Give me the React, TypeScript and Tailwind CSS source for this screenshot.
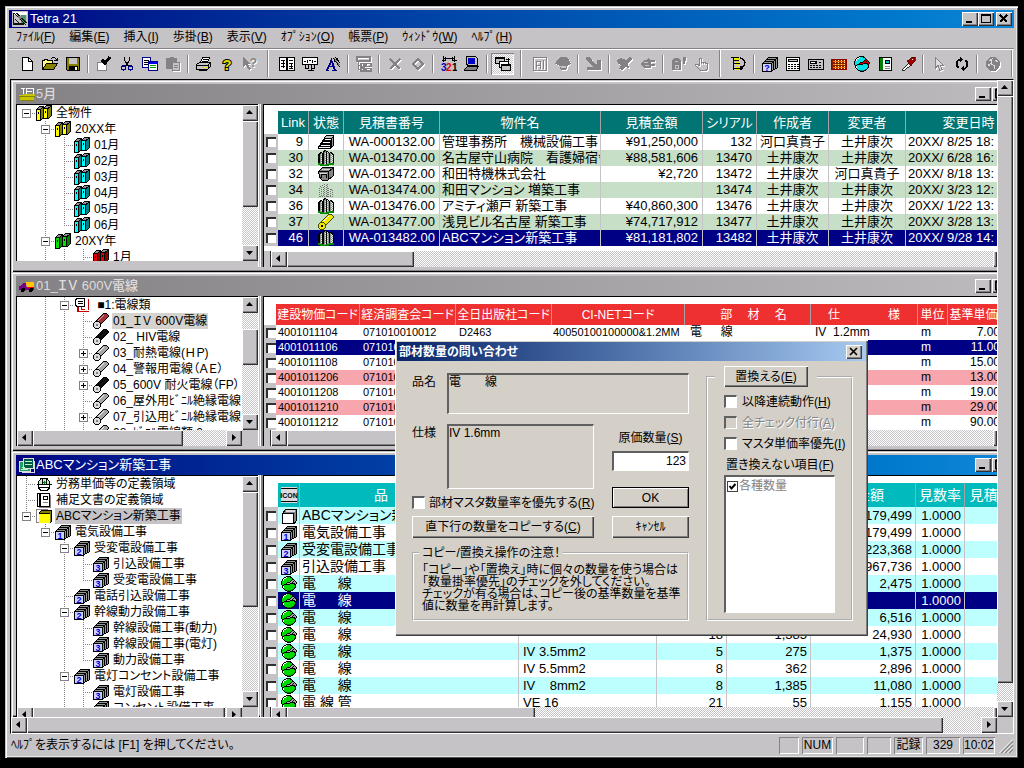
import type { ReactNode } from 'react';

const RAISED = 'bg-[#c6c3c6] shadow-[inset_1px_1px_0_#fff,inset_-1px_-1px_0_#313031,inset_-2px_-2px_0_#848284]';
const DITHER = 'bg-[repeating-conic-gradient(#fff_0_25%,#c6c3c6_0_50%)] bg-[length:2px_2px]';

/* ---------- icons ---------- */

function Svg({ children, size = 16 }: { children: ReactNode; size?: number }) {
  return (
    <svg width={size} height={size} viewBox="0 0 16 16" shapeRendering="crispEdges" fill="none" className="shrink-0" aria-hidden="true">
      {children}
    </svg>
  );
}

function Off({ children }: { children: ReactNode }) {
  return (
    <Svg>
      <g color="#ffffff" transform="translate(1 1)">{children}</g>
      <g color="#848284">{children}</g>
    </Svg>
  );
}

/* Draws a 16x16 sprite: one character per pixel, equal neighbours merged into one rect. */
function Sprite({ rows, colors, children }: { rows: string[]; colors: Record<string, string>; children?: ReactNode }) {
  const rects: ReactNode[] = [];
  rows.forEach((row, y) => {
    let x = 0;
    while (x < row.length) {
      const ch = row[x];
      let end = x + 1;
      while (end < row.length && row[end] === ch) end += 1;
      if (ch !== '.') rects.push(<rect key={`${x}-${y}`} x={x} y={y} width={end - x} height={1} fill={colors[ch]} />);
      x = end;
    }
  });
  return <Svg>{rects}{children}</Svg>;
}

const BOOKS = [
  '..........kkkkkk',
  '...kkkkk.kggggkk',
  '..kgggkkkgggkksk',
  '.kgggkskkkkkkssk',
  'kkkkksskfffksssk',
  'kfffksskfffksssk',
  'kfffksskfkfksssk',
  'kfkfksskfkfksssk',
  'kfkfksskfffksssk',
  'kfffksskfffksssk',
  'kfffksskfffksssk',
  'kfffksskfffkssk.',
  'kfffksskfffksk..',
  'kfffkskkkkkkk...',
  'kfffkk..........',
  'kkkkk...........',
];
const BOX = [
  '................',
  '......kkkkkkkkkk',
  '.....kggggggggkk',
  '....kkkkkkkkkkgk',
  '...kggggggggkkgk',
  '..kkkkkkkkkkgkgk',
  '.kggggggggkkgkgk',
  'kkkkkkkkkkgkgkgk',
  'kbbbbbbbbkgkgkgk',
  'kbbbbbbbbkgkgkgk',
  'kbbbbbbbbkgkgkgk',
  'kbbbbbbbbkgkgkgk',
  'kbbbbbbbbkgkgkk.',
  'kbbbbbbbbkgkk...',
  'kbbbbbbbbkk.....',
  'kkkkkkkkkk......',
];
const HELMET = [
  '.....kkkkk......',
  '...kkwfffkk.....',
  '..kwwffffffk....',
  '.kwffffffffkk...',
  '.kwfffffffkaak..',
  'kffffffffkaakak.',
  'kfffffkkkaakaaak',
  'kffffkaaakkkkkak',
  'kffkkkkkkffffkk.',
  '.kkfffffffffffk.',
  '.kwfffffffffffk.',
  '.kwffffffffffdk.',
  '..kffffffffffk..',
  '...kfffffffdk...',
  '....kkddddkk....',
  '......kkkk......',
];
const TOWERS = [
  '......kk........',
  '.....kkgkk......',
  '..kk.kggkwk.kk..',
  '.kkgkkgwkggkgkk.',
  'kkgwkkggkwgkgwkk',
  'kkggkkgwkggkggwk',
  'kkgwkkggkwgkgwgk',
  'kkggkkgwkggkggwk',
  'kkgwkkggkwgkgwgk',
  'kkggkkgwkggkggwk',
  'kkgwkkggkwgkgwgk',
  'kkggkkgwkggkggwk',
  'kkgwkkggkwgkgwgk',
  'eeggkkgwkggeeeee',
  'eeeeeeggeeeeeeee',
  '..eeeeeeeee.....',
];
const CABLE = [
  '..........kkkk..',
  '.........kbbbbk.',
  '........kblbbbbk',
  '.......kblbbbbbk',
  '......kblbbbbbk.',
  '.....kblbbbbbk..',
  '....kblbbbbbk...',
  '...kblbbbbbk....',
  '..kkkkbbbbk.....',
  '.kwwwwkbbk......',
  'kwwwwwwkk.......',
  'kwwggwwk........',
  'kwwggwwk........',
  'kwwwwwwk........',
  '.kwwwwk.........',
  '..kkkk..........',
];

const C = 'currentColor';

const IconNew = <Svg><path d="M3.5 1.5H9.5L13.5 5.5V14.5H3.5z" fill="#fff" stroke="#000" /><path d="M9.5 1.5V5.5H13.5" stroke="#000" /></Svg>;
const IconOpen = (
  <Svg>
    <path d="M0.5 13.5V4.5H2.5V3.5H5.5V4.5H10.5V7.5" fill="#ffff7b" stroke="#000" />
    <path d="M0.5 13.5L4.5 7.5H15.5L11.5 13.5z" fill="#848200" stroke="#000" />
    <path d="M9 2.5H10M10 1.5H13M13 2.5H14M14 3.5H15M12 4.5H15M15 1.5V5" stroke="#000" />
  </Svg>
);
const IconSave = (
  <Svg>
    <path d="M1.5 1.5H14.5V14.5H2.5L1.5 13.5z" fill="#848200" stroke="#000" />
    <rect x="4" y="2" width="8" height="6" fill="#c6c3c6" stroke="none" />
    <rect x="4" y="10" width="9" height="4" fill="#000" />
    <rect x="10" y="11" width="2" height="3" fill="#fff" />
  </Svg>
);
const IconCheckBox = (
  <Svg>
    <rect x="1.5" y="6.5" width="9" height="8" fill="#fff" stroke="#848284" />
    <path d="M6 4L9 7L14 1" stroke="#000" strokeWidth="3" />
  </Svg>
);
const IconCut = (
  <Svg>
    <path d="M5.5 1V4L8.5 9L10 11M10.5 1V4L7.5 9L6 11" stroke="#000" />
    <circle cx="4.5" cy="12" r="2" stroke="#000084" strokeWidth="1.3" />
    <circle cx="11.5" cy="12" r="2" stroke="#000084" strokeWidth="1.3" />
  </Svg>
);
const IconCopy = (
  <Svg>
    <rect x="0.5" y="1.5" width="8" height="10" fill="#fff" stroke="#000084" />
    <path d="M2 4.5H7M2 6.5H7M2 8.5H7" stroke="#000" />
    <rect x="6.5" y="5.5" width="9" height="9" fill="#fff" stroke="#000084" />
    <path d="M7 7H15" stroke="#0000ff" strokeWidth="2" />
    <path d="M8 9.5H14M8 11.5H14" stroke="#00a200" />
  </Svg>
);
const IconPaste = (
  <Svg>
    <path d="M1 2H5V1H9V2H12V6H7V13H1z" fill="#848284" />
    <rect x="7.5" y="6.5" width="7" height="8" fill="#c6c3c6" stroke="#848284" />
    <path d="M9 9.5H13M9 11.5H13" stroke="#848284" />
    <path d="M15.5 7V15.5H8" stroke="#fff" />
  </Svg>
);
const IconPrint = (
  <Svg>
    <path d="M4.5 6.5L6.5 1.5H13.5L11.5 6.5z" fill="#fff" stroke="#000" />
    <path d="M7 3.5H12M6 5.5H11" stroke="#000" />
    <path d="M0.5 8.5L3.5 6.5H14.5V10.5L11.5 13.5H0.5z" fill="#c6c3c6" stroke="#000" />
    <path d="M1 9.5H12L14 7M12 9V13" stroke="#000" />
    <rect x="8" y="11" width="3" height="1" fill="#efe700" />
    <path d="M3 14.5H11" stroke="#000" />
  </Svg>
);
const IconHelp = (
  <Svg>
    <text x="8" y="13.5" textAnchor="middle" fontSize="15" fontWeight="bold" fontFamily="Liberation Sans, sans-serif" fill="#e7df00" stroke="#000" strokeWidth="2" paintOrder="stroke">?</text>
  </Svg>
);
const IconCtxHelp = (
  <Off>
    <path d="M1 1L1 11L4 9L7 14L9 13L6 8H9z" fill={C} />
    <text x="11.5" y="11" textAnchor="middle" fontSize="12" fontWeight="bold" fontFamily="Liberation Sans, sans-serif" fill={C}>?</text>
  </Off>
);
const IconBookOpen = (
  <Svg>
    <rect x="0.5" y="1.5" width="15" height="13" fill="#fff" stroke="#000" />
    <path d="M8 1V15" stroke="#000" strokeWidth="2" />
    <path d="M2 4.5H6M10 4.5H14M2 7.5H6M10 7.5H14M2 10.5H6M10 10.5H14M10 12.5H14M4.5 4V12M12.5 7V12" stroke="#000" />
  </Svg>
);
const IconLabel = (
  <Svg>
    <rect x="0.5" y="1.5" width="15" height="7" fill="#fff" stroke="#000" />
    <path d="M2 5.5H4M5 3.5V7M7 4.5H9M10.5 3.5V7M12 5.5H14M3.5 9V12.5H6.5V9M9.5 9V14.5M12.5 9V12.5H9M6 14.5H12" stroke="#000" />
  </Svg>
);
const IconWrite = (
  <Svg>
    <path d="M0.5 14.5H4M7 14.5H12M2 14L6.5 4.5L10 14M3.5 10.5H8" stroke="#000084" strokeWidth="1.8" />
    <path d="M8 2L15 11M10 1L15 7M9 6L13 2" stroke="#000" />
    <path d="M9.5 2.5L14.5 9" stroke="#848284" />
  </Svg>
);
const IconTreeOff = <Off><path d="M1 1H14V5H1zM2.5 5V14M2 9.5H5M2 13.5H5M5 7.5H8V11H5zM10 7.5H15V10.5H10zM5 12.5H8V15H5zM10 12.5H15V15H10zM8 9.5H10" stroke={C} strokeWidth="1.4" /></Off>;
const IconDelete = <Off><path d="M3 3L13 13M13 3L3 13" stroke={C} strokeWidth="2.4" /></Off>;
const IconDiamond = <Off><path d="M3 8L8 3L13 8L8 13z" stroke={C} strokeWidth="2.2" /></Off>;
const Icon321 = (
  <Svg>
    <path d="M2 2.5H14M2.5 0V6M13.5 0V6M0.5 4.5H5M11 4.5H16M4.5 1V4M11.5 1V4" stroke="#000" />
    <g fontSize="10" fontWeight="bold" fontFamily="Liberation Sans, sans-serif">
      <text x="0" y="15" fill="#0000c6">3</text>
      <text x="5" y="15" fill="#e70000">2</text>
      <text x="11" y="15" fill="#000">1</text>
    </g>
  </Svg>
);
const IconPC = (
  <Svg>
    <path d="M2.5 0.5H11.5L13.5 2.5V9.5H4.5L2.5 8.5z" fill="#c6c3c6" stroke="#000" />
    <rect x="4" y="2" width="7" height="6" fill="#0000c6" />
    <path d="M0.5 13.5L3.5 10.5H14.5L12.5 13.5V14.5H0.5z" fill="#848284" stroke="#000" />
  </Svg>
);
const IconCascade = (
  <Svg>
    <rect x="0.5" y="1.5" width="9" height="6" fill="#c6c3c6" stroke="#000" />
    <path d="M1 2.5H9M11 3.5H15M13.5 2V5" stroke="#000" />
    <rect x="4.5" y="5.5" width="9" height="6" fill="#fff" stroke="#000" />
    <rect x="6.5" y="8.5" width="9" height="6" fill="#c6c3c6" stroke="#000" />
    <path d="M7 9.5H15" stroke="#000" />
  </Svg>
);
const IconFrameOff = <Off><path d="M1.5 1.5H14.5V14.5H1.5zM4 5.5H8V13M4 9.5H8M11.5 4V13M4.5 5V13" stroke={C} /></Off>;
const IconHeadOff = <Off><path d="M0 8L2 4L5 1H11L14 4L16 8L13 9L11 14H6L4 9z" fill={C} /><path d="M5 9.5H11V12H6z" fill="#c6c3c6" /></Off>;
const IconChartOff = <Off><path d="M0 1H4L9 8H11V4H15V14H1V11H7L0 4z" fill={C} /></Off>;
const IconHandOff = <Off><path d="M0 4L4 2L9 4L13 1L15 3L11 8L12 12L8 11L6 14L2 13L4 9L1 8z" fill={C} /></Off>;
const IconFishOff = <Off><path d="M0 8L4 4H7L8 2L10 4H15V6H11V8H15V10H11V12H4z" fill={C} /><path d="M4 6.5H8M5 9.5H9" stroke="#c6c3c6" /></Off>;
const IconLockOff = <Off><path d="M1 14V5L3 2H7L10 5V14zM12 1H15V5H14V8H12z" fill={C} /><path d="M4 5.5H7M4 9H7V12H4z" stroke="#c6c3c6" /></Off>;
const IconPalmOff = <Off><path d="M5.5 9V2.5H7.5V7.5M7.5 6.5H9.5V8M9.5 6.5H11.5V8M11.5 7.5H13.5V12L12.5 14.5H6.5L1.5 9.5V8.5H3.5L5.5 10" stroke={C} strokeWidth="1.2" /></Off>;
const IconTreeSync = (
  <Svg>
    <path d="M2 1H8V4H2zM4 6H9V9H4zM4 11H9V14H4z" fill="#efe700" />
    <path d="M2.5 1V13.5M2 7.5H9M2 12.5H9M0 1.5H8M3 4.5H8" stroke="#000" />
    <path d="M9 2L12 3L14 6L13 10L10 12M10 9.5V14M8 12.5H12" stroke="#000" strokeWidth="1.3" />
  </Svg>
);
const IconCalc = (
  <Svg>
    <rect x="1.5" y="1.5" width="13" height="13" fill="#fff" stroke="#000" />
    <rect x="3.5" y="3.5" width="9" height="2" fill="#c6c3c6" stroke="#000" />
    <path d="M3 8.5H14M3 10.5H14M3 12.5H14" stroke="#000" strokeDasharray="2 1" />
  </Svg>
);
const IconCard = (
  <Svg>
    <rect x="0.5" y="3.5" width="15" height="10" fill="#c6c3c6" stroke="#000" />
    <rect x="2" y="5" width="7" height="3" fill="#000" /><rect x="3" y="6" width="4" height="1" fill="#fff" />
    <path d="M11 6.5H14M2 9.5H14M2 11.5H14" stroke="#000" strokeDasharray="2 1" />
  </Svg>
);
const IconAbacus = (
  <Svg>
    <rect x="0.5" y="3.5" width="15" height="10" fill="#842000" stroke="#8c0000" />
    <path d="M2 5.5H14M2 8.5H14M2 11.5H14" stroke="#ff6500" strokeWidth="1.2" />
    <path d="M4.5 4V13M7.5 4V13M10.5 4V13M13.5 4V13" stroke="#fff37b" strokeDasharray="1 1" />
  </Svg>
);

function HelmetIcon({ main, dark, accent }: { main: string; dark: string; accent: string }) {
  return <Sprite rows={HELMET} colors={{ k: '#000', w: '#ffffff', f: main, d: dark, a: accent }} />;
}
const IconNotebook = (
  <Svg>
    <rect x="2.5" y="1.5" width="12" height="13" fill="#fff" stroke="#000" />
    <rect x="3" y="2" width="3" height="12" fill="#008200" />
    <rect x="8.5" y="4.5" width="4" height="3" fill="#00c3c6" stroke="#000" />
    <path d="M8 10.5H13M8 12.5H13" stroke="#848284" />
  </Svg>
);
const IconDropper = (
  <Svg>
    <path d="M2 14L9 7L11 9L5 14z" fill="#fff" stroke="#000" strokeWidth="0.8" />
    <path d="M7 5L9 4L12 1H15V5L12 8L11 10z" fill="#a50000" stroke="#420000" strokeWidth="0.8" />
    <path d="M12 3.5H13" stroke="#fff" />
  </Svg>
);
const IconPointerOff = <Off><path d="M4.5 1.5V12L7 9.5L9 14.5L11 13.5L9 9H12z" stroke={C} fill="#dedbde" /></Off>;
const IconRefresh = (
  <Svg>
    <path d="M7 3.5H5L3 5.5V10L4.5 12M9 12.5H11L13 10.5V6L11.5 4" stroke="#000" strokeWidth="2" />
    <path d="M6 1V6L9 3.5zM10 10V15L7 12.5z" fill="#000" />
  </Svg>
);
const IconGlobeOff = <Off><circle cx="8" cy="8" r="7" fill={C} /><path d="M4 5L7 3L6 8L10 10L9 13M10 4L13 6M3 9H5" stroke="#dedbde" strokeWidth="1.2" /></Off>;

function BoxIcon({ n }: { n: string }) {
  return (
    <Sprite rows={BOX} colors={{ k: '#000', g: '#949694', b: '#ced3ff' }}>
      <text x="5" y="15" textAnchor="middle" fontSize="9" fontWeight="bold" fontFamily="Liberation Sans, sans-serif" fill="#0000d6">{n}</text>
    </Sprite>
  );
}
function BooksIcon({ face, side }: { face: string; side: string }) {
  return <Sprite rows={BOOKS} colors={{ k: '#000', g: '#949294', f: face, s: side }} />;
}
function CableIcon({ body, light }: { body: string; light: string }) {
  return <Sprite rows={CABLE} colors={{ k: '#000', b: body, l: light, w: '#dedbde', g: '#848284' }} />;
}
const IconDocStack = (
  <Svg>
    <path d="M4 2V14.5H15M7.5 2V12.5H11M14.5 2V13" stroke="#c60000" strokeWidth="1.4" />
    <path d="M1.5 2.5L3.5 1.5H10.5V9.5H3.5L1.5 8.5z" fill="#fff" stroke="#000" strokeWidth="1.5" />
    <path d="M4 4.5H9M4 6.5H9" stroke="#000" />
  </Svg>
);
const IconHat = (
  <Svg>
    <path d="M2.5 8V5.5L5 2.5H11L13.5 5.5V8" fill="#d6dfd6" stroke="#000" />
    <path d="M2.5 9V12L5 14.5H11L13.5 12V9" fill="#fff" stroke="#000" />
    <path d="M0.5 8.5H15.5M3 11.5H13M6.5 3V8M10.5 3V8" stroke="#000" />
    <path d="M7 6.5H10M8.5 4.5V8" stroke="#008200" />
  </Svg>
);
const IconManual = (
  <Svg>
    <rect x="1.5" y="1.5" width="12" height="13" fill="#fff" stroke="#000" />
    <path d="M4.5 1.5V14.5M3 2V14" stroke="#000" />
    <rect x="7" y="4" width="4" height="3" fill="#fff" stroke="#000" />
    <path d="M7 10.5H12M14.5 3V15.5H3" stroke="#848284" />
  </Svg>
);
const IconYellowCube = (
  <Svg>
    <path d="M0.5 5.5V1.5H11.5L13.5 4.5" fill="#fff" stroke="#848284" />
    <path d="M3 5L5 2H16V13L14 15H3z" fill="#000" />
    <path d="M5 3H15V5H4z" fill="#848200" /><path d="M14 5H15V13L14 14z" fill="#848200" />
    <rect x="3" y="6" width="11" height="9" fill="#ffff00" />
    <path d="M0.5 3V14.5H3" stroke="#848284" />
  </Svg>
);
const IconWhiteCube = (
  <Svg>
    <path d="M1.5 5.5L4.5 1.5H15.5V12.5L13.5 15H1.5z" fill="#848284" stroke="#000" />
    <rect x="1.5" y="5.5" width="11" height="10" fill="#fff" stroke="#000" />
    <path d="M5 3H14" stroke="#dedbde" strokeWidth="2" />
  </Svg>
);
const IconSteps = (
  <Svg>
    <path d="M6 3L8 1H16V11L13 15H0V12L2 11V9L4 8V6L6 5z" fill="#000" />
    <path d="M8 2H15L13 4H7z" fill="#c6c3c6" />
    <path d="M7 5H13V6H7zM5 8H12V9H5zM3 11H12V12H3zM1 13H12V14H1z" fill="#fff" />
    <path d="M14 4H15V11L14 12z" fill="#949694" />
  </Svg>
);
const IconTowers = <Sprite rows={TOWERS} colors={{ k: '#000', g: '#8c968c', w: '#e7efe7', e: '#008a00' }} />;
const IconTowersGhost = (
  <Svg>
    <path d="M1.5 14.5V5.5L4 3.5L5.5 5V14.5M6.5 14.5V1.5L9.5 2.5V14.5M10.5 14.5V5.5L13 6.5L14.5 9.5V14.5H1M3.5 5V14M8.5 3V14M12.5 7V14" stroke="#737573" strokeDasharray="1 1" />
  </Svg>
);
const IconCrate = (
  <Svg>
    <path d="M0.5 5.5L4.5 1.5H15.5V9.5L9.5 14.5H4.5L1.5 11z" fill="#848684" stroke="#000" />
    <path d="M0.5 5.5H10.5L15 2M10.5 5.5V14M3.5 12V8.5H8.5V12" stroke="#000" />
    <path d="M4 3.5H12M2 7.5H9" stroke="#dedbde" />
  </Svg>
);
const IconRoll = <Sprite rows={CABLE} colors={{ k: '#4a4900', b: '#efe700', l: '#ffffff', w: '#efe700', g: '#000' }} />;
const IconApp = (
  <Svg>
    <rect width="16" height="16" fill="#c6c3c6" />
    <path d="M1 1H15V4H1z" fill="#fff" /><path d="M9 4H14V12H9z" fill="#42a263" />
    <path d="M1.5 2V13H12M2 2L14 14M4 2L15 12M3 8L7 12" stroke="#101010" strokeWidth="1.3" />
    <path d="M6 5L11 5L7 9" fill="#848284" />
  </Svg>
);
const IconShip = (
  <Svg>
    <path d="M0 9H4V8H16V10L14 15H2z" fill="#c6c300" />
    <path d="M0 10.5H16M2 14.5H14" stroke="#848200" />
    <path d="M2 2.5H6M4.5 2V8M7 2.5H14V8M8 5.5H13M7.5 2V8" stroke="#fff" />
  </Svg>
);
const IconTruck = (
  <Svg>
    <path d="M0 8H2L4 5H7V9H15V12H0z" fill="#7b0084" />
    <path d="M7 4H15V9H8z" fill="#ffc300" /><path d="M8 9.5H15" stroke="#ff0000" />
    <circle cx="4" cy="12" r="2" fill="#000" /><circle cx="12" cy="12" r="2" fill="#000" />
  </Svg>
);
const IconSheets = (
  <Svg>
    <rect x="0.5" y="4.5" width="11" height="10" fill="#21a263" stroke="#dedbde" />
    <rect x="4.5" y="1.5" width="10" height="10" fill="#005942" stroke="#dedbde" />
    <path d="M6 4.5H13M6 7.5H13M2 12.5H9M3 10.5H6" stroke="#b5ffc6" />
    <path d="M3 15.5H15.5V4" stroke="#dedbde" />
  </Svg>
);

/* ---------- window controls ---------- */

type Dir = 'up' | 'down' | 'left' | 'right';
const ARROWS: Record<Dir, string> = {
  up: 'M4 9H11L7.5 5z',
  down: 'M4 6H11L7.5 10z',
  left: 'M9 4V11L5 7.5z',
  right: 'M6 4V11L10 7.5z',
};

function Arrow({ dir }: { dir: Dir }) {
  return (
    <button type="button" aria-label={`scroll ${dir}`} className={`h-4 w-4 shrink-0 ${RAISED}`}>
      <svg width="16" height="16" viewBox="0 0 16 16" aria-hidden="true"><path d={ARROWS[dir]} fill="#000" /></svg>
    </button>
  );
}

function VScroll({ space, thumb }: { space?: string; thumb: string }) {
  return (
    <div className={`flex w-4 shrink-0 flex-col ${DITHER}`}>
      <Arrow dir="up" />
      <div className="flex min-h-0 flex-1 flex-col">
        {space && <div className={`shrink-0 ${space}`} />}
        <div className={`${thumb} ${RAISED}`} />
      </div>
      <Arrow dir="down" />
    </div>
  );
}

function WinButton({ kind, cut }: { kind: 'min' | 'max' | 'close'; cut?: boolean }) {
  return (
    <button type="button" aria-label={kind} className={`h-[14px] shrink-0 overflow-hidden ${cut ? 'w-[5px]' : 'w-4'} ${RAISED}`}>
      <svg width="16" height="14" viewBox="0 0 16 14" fill="none" stroke="#000" shapeRendering="crispEdges" aria-hidden="true">
        {kind === 'min' && <path d="M4 10H10" strokeWidth="2" />}
        {kind === 'max' && <path d="M3.5 2.5H12.5V10.5H3.5zM3 3.5H13" />}
        {kind === 'close' && <path d="M4 3L11 10M11 3L4 10" strokeWidth="1.7" />}
      </svg>
    </button>
  );
}

function Guide({ kind }: { kind: string }) {
  const up = '|tlmpe'.includes(kind);
  const down = '|tmp'.includes(kind);
  const side = 'tlmpeM'.includes(kind);
  const box = 'mpeM'.includes(kind);
  return (
    <svg width="19" height="16" viewBox="0 0 19 16" shapeRendering="crispEdges" fill="none" className="shrink-0" aria-hidden="true">
      <g stroke="#848284" strokeDasharray="1 1">
        {up && <path d="M9.5 0V8" />}
        {down && <path d="M9.5 8V16" />}
        {side && <path d="M9 8.5H19" />}
      </g>
      {box && <rect x="5.5" y="4.5" width="8" height="8" fill="#fff" stroke="#848284" />}
      {box && <path d={kind === 'p' ? 'M7 8.5H12M9.5 6V11' : 'M7 8.5H12'} stroke="#000" />}
    </svg>
  );
}

type Node = { g: string; icon: ReactNode; text: string; sel?: string };

function Tree({ rows, label }: { rows: Node[]; label: string }) {
  return (
    <ul aria-label={label} className="min-h-0 min-w-0 flex-1 overflow-hidden bg-white">
      {rows.map((r, i) => (
        <li key={i} className="flex h-4 items-center text-[12px] leading-[16px] whitespace-pre">
          {r.g.split('').map((k, j) => <Guide key={j} kind={k} />)}
          {r.icon}
          <span className={`ml-[3px] px-px ${r.sel ?? ''}`}>{r.text}</span>
        </li>
      ))}
    </ul>
  );
}

function HScroll({ thumb, cut }: { thumb: string; cut?: boolean }) {
  return (
    <div className={`flex shrink-0 overflow-hidden ${cut ? 'h-[10px]' : 'h-4'} ${DITHER}`}>
      <div className="h-4 w-[7px] shrink-0 border-r border-[#313031] bg-[#c6c3c6]" />
      <Arrow dir="left" />
      <div className={`h-4 shrink-0 ${thumb} ${RAISED}`} />
      <div className="flex-1" />
      <div className={`h-4 w-1 shrink-0 overflow-hidden ${RAISED}`} />
    </div>
  );
}

function TreeHScroll({ thumb, cut }: { thumb: string; cut?: boolean }) {
  return (
    <div className={`flex shrink-0 overflow-hidden ${cut ? 'h-[10px]' : 'h-4'}`}>
      <div className={`flex min-w-0 flex-1 ${DITHER}`}>
        <Arrow dir="left" />
        <div className={`h-4 ${thumb} ${RAISED}`} />
        <div className="flex-1" />
        <Arrow dir="right" />
      </div>
      <div className="w-4 bg-[#c6c3c6]" />
    </div>
  );
}

function Pane({ title, icon, bar, last, tree, list }: { title: string; icon: ReactNode; bar: string; last?: boolean; tree: ReactNode; list: ReactNode }) {
  return (
    <section className={`flex min-h-0 min-w-0 flex-col overflow-hidden pt-1 pl-[5px] shadow-[inset_1px_1px_0_#c6c3c6,inset_2px_2px_0_#fff,inset_0_-1px_0_#000,inset_0_-2px_0_#848284] ${last ? '' : 'pb-[5px]'}`}>
      <header className={`flex h-5 shrink-0 items-center bg-gradient-to-r ${bar}`}>
        <span className="ml-[3px] flex">{icon}</span>
        <h2 className="ml-px flex-1 text-[13px]">{title}</h2>
        <WinButton kind="min" />
        <span className="ml-px flex"><WinButton kind="max" cut /></span>
      </header>
      <div className="flex min-h-0 flex-1">
        {tree}
        <div className="w-[5px] shrink-0 border-l border-white shadow-[inset_-2px_0_0_#848284,inset_-3px_0_0_#fff]" />
        <div className="flex min-w-0 flex-1 flex-col overflow-hidden border-t border-l border-black bg-white">{list}</div>
      </div>
    </section>
  );
}

const treeBox = 'flex w-[242px] shrink-0 flex-col overflow-hidden border-t border-l border-black';

function RowCheck({ label }: { label: string }) {
  return <input type="checkbox" aria-label={label} className="ml-[2px] block h-[10px] w-[10px] appearance-none border-t-2 border-l-2 border-[#313031] bg-white" />;
}

type Col = { w: string; head: ReactNode; align: string; headClass?: string };

function Grid({ cols, rows, top, headBg, headText, head, row, text, alt, base, selected, checkW, line }: {
  cols: Col[]; rows: ReactNode[][]; top: string; headBg: string; headText: string; head: string; row: string; text: string;
  alt: (i: number) => boolean; base: string; selected: number; checkW: string; line: string;
}) {
  return (
    <div className={`min-h-0 flex-1 overflow-hidden ${top}`}>
      <table className="w-0 table-fixed border-separate border-spacing-0">
        <colgroup>
          <col className={checkW} />
          {cols.map((c, i) => <col key={i} className={c.w} />)}
        </colgroup>
        <thead>
          <tr className={`${head} ${headText} text-white`}>
            <td className="p-0" />
            {cols.map((c, i) => (
              <th key={i} scope="col" className={`overflow-hidden border-r border-[#a5a2a5] p-0 text-center font-normal whitespace-pre ${headBg} ${c.headClass ?? ''}`}>{c.head}</th>
            ))}
          </tr>
        </thead>
        <tbody>
          {rows.map((r, i) => (
            <tr key={i} className={`${row} ${text} ${i === selected ? 'bg-[#000084] text-white' : alt(i) ? base : 'bg-white'}`}>
              <td className="bg-[#c6c3c6] p-0"><RowCheck label={`行 ${i + 1}`} /></td>
              {cols.map((c, j) => (
                <td key={j} className={`overflow-hidden p-0 whitespace-pre ${row} ${line} ${c.align}`}>{r[j]}</td>
              ))}
            </tr>
          ))}
        </tbody>
      </table>
    </div>
  );
}

/* ---------- data ---------- */

const yellow = <BooksIcon face="#ffff00" side="#848200" />;
const cyan = <BooksIcon face="#00ffff" side="#008284" />;
const green = <BooksIcon face="#00e300" side="#008200" />;
const red = <BooksIcon face="#e70000" side="#840000" />;

const months: Node[] = [
  { g: 'M', icon: yellow, text: '全物件' },
  { g: ' m', icon: yellow, text: '20XX年' },
  { g: ' |t', icon: cyan, text: '01月' },
  { g: ' |t', icon: cyan, text: '02月' },
  { g: ' |t', icon: cyan, text: '03月' },
  { g: ' |t', icon: cyan, text: '04月' },
  { g: ' |t', icon: cyan, text: '05月' },
  { g: ' |l', icon: cyan, text: '06月' },
  { g: ' m', icon: green, text: '20XY年' },
  { g: ' ||t', icon: red, text: '1月' },
];

const greyCable = <CableIcon body="#a5a6a5" light="#efefef" />;
const blackCable = <CableIcon body="#101010" light="#101010" />;
const cables: Node[] = [
  { g: ' |m', icon: IconDocStack, text: ' ■1:電線類' },
  { g: ' ||t', icon: <CableIcon body="#a53139" light="#d6a2a5" />, text: '01_ＩＶ 600V電線', sel: 'bg-[#d6d3ce]' },
  { g: ' ||t', icon: blackCable, text: '02_ HIV電線' },
  { g: ' ||p', icon: greyCable, text: '03_耐熱電線(ＨＰ)' },
  { g: ' ||p', icon: greyCable, text: '04_警報用電線（ＡＥ）' },
  { g: ' ||p', icon: blackCable, text: '05_600V 耐火電線（FP）' },
  { g: ' ||t', icon: greyCable, text: '06_屋外用ﾋﾞﾆﾙ絶縁電線' },
  { g: ' ||p', icon: greyCable, text: '07_引込用ﾋﾞﾆﾙ絶縁電線' },
  { g: ' ||t', icon: greyCable, text: '08_ﾋﾞﾆﾙ電線類 2' },
];

const works: Node[] = [
  { g: 't', icon: IconHat, text: '労務単価等の定義領域' },
  { g: 't', icon: IconManual, text: '補足文書の定義領域' },
  { g: 'e', icon: IconYellowCube, text: 'ABCマンション新築工事', sel: 'bg-[#c6c3c6]' },
  { g: ' e', icon: <BoxIcon n="1" />, text: '電気設備工事' },
  { g: '  m', icon: <BoxIcon n="2" />, text: '受変電設備工事' },
  { g: '  |t', icon: <BoxIcon n="3" />, text: '引込設備工事' },
  { g: '  |l', icon: <BoxIcon n="3" />, text: '受変電設備工事' },
  { g: '  t', icon: <BoxIcon n="2" />, text: '電話引込設備工事' },
  { g: '  m', icon: <BoxIcon n="2" />, text: '幹線動力設備工事' },
  { g: '  |t', icon: <BoxIcon n="3" />, text: '幹線設備工事(動力)' },
  { g: '  |t', icon: <BoxIcon n="3" />, text: '幹線設備工事(電灯)' },
  { g: '  |l', icon: <BoxIcon n="3" />, text: '動力設備工事' },
  { g: '  m', icon: <BoxIcon n="2" />, text: '電灯コンセント設備工事' },
  { g: '  |t', icon: <BoxIcon n="3" />, text: '電灯設備工事' },
  { g: '  |t', icon: <BoxIcon n="3" />, text: 'コンセント設備工事' },
];

const mid = (icon: ReactNode) => <span className="flex justify-center">{icon}</span>;

const projectCols: Col[] = [
  { w: 'w-[31px]', head: 'Link', align: 'text-right pr-[5px]' },
  { w: 'w-[35px]', head: '状態', align: '' },
  { w: 'w-[96px]', head: '見積書番号', align: 'text-right pr-[4px]' },
  { w: 'w-[161px]', head: '物件名', align: 'pl-[2px]' },
  { w: 'w-[102px]', head: '見積金額', align: 'text-right pr-[4px]' },
  { w: 'w-[54px]', head: 'シリアル', align: 'text-right pr-[4px]' },
  { w: 'w-[72px]', head: '作成者', align: 'text-center' },
  { w: 'w-[77px]', head: '変更者', align: 'text-center' },
  { w: 'w-[126px]', head: '変更日時', align: 'pl-[2px]' },
];
const projectRows: ReactNode[][] = [
  ['9', mid(IconSteps), 'WA-000132.00', '管理事務所　機械設備工事', '¥91,250,000', '132', '河口真貴子', '土井康次', '20XX/ 8/25 18:'],
  ['30', mid(IconTowers), 'WA-013470.00', '名古屋守山病院　看護婦宿舎', '¥88,581,606', '13470', '土井康次', '土井康次', '20XX/ 6/28 16:'],
  ['32', mid(IconCrate), 'WA-013472.00', '和田特機株式会社', '¥2,720', '13472', '土井康次', '河口真貴子', '20XX/ 8/18 13:'],
  ['34', mid(IconTowersGhost), 'WA-013474.00', '和田マンション 増築工事', '', '13474', '土井康次', '土井康次', '20XX/ 3/23 12:'],
  ['36', mid(IconTowers), 'WA-013476.00', 'アミティ瀬戸 新築工事', '¥40,860,300', '13476', '土井康次', '土井康次', '20XX/ 1/22 13:'],
  ['37', mid(IconRoll), 'WA-013477.00', '浅見ビル名古屋 新築工事', '¥74,717,912', '13477', '土井康次', '土井康次', '20XX/ 3/28 13:'],
  ['46', mid(IconTowers), 'WA-013482.00', 'ABCマンション新築工事', '¥81,181,802', '13482', '土井康次', '土井康次', '20XX/ 9/28 14:'],
];

const materialCols: Col[] = [
  { w: 'w-[84px]', head: '建設物価コード', align: 'pl-[2px]' },
  { w: 'w-[96px]', head: '経済調査会コード', align: 'pl-[3px]' },
  { w: 'w-[96px]', head: '全日出版社コード', align: 'pl-[3px]' },
  { w: 'w-[133px]', head: 'CI-NETコード', align: 'pl-px' },
  { w: 'w-[126px]', head: '　部　 材　 名', align: 'pl-[5px] text-[12px]' },
  { w: 'w-[107px]', head: '仕　　　　様', align: 'pl-[4px] text-[12px]' },
  { w: 'w-[30px]', head: '単位', align: 'pl-[3px] text-[12px]' },
  { w: 'w-[52px]', head: '基準単価', align: 'text-right text-[12px]' },
];
const mat = (code: string, price: string): ReactNode[] => [code, '071010010012', '', '', '', '', 'm', price];
const materialRows: ReactNode[][] = [
  ['4001011104', '071010010012', 'D2463', '40050100100000&1.2MM', '電　  線', 'IV  1.2mm', 'm', '7.00'],
  mat('4001011106', '11.00'),
  mat('4001011108', '15.00'),
  mat('4001011206', '13.00'),
  mat('4001011208', '19.00'),
  mat('4001011210', '29.00'),
  mat('4001011212', '90.00'),
];

const iconHead = (
  <svg width="18" height="16" viewBox="0 0 18 16" className="mx-auto block" aria-hidden="true">
    <path d="M1 0H17V16H1z" fill="#dedbde" />
    <path d="M1 1.5H17M1 14.5H17" stroke="#000" />
    <text x="9" y="11" textAnchor="middle" fontSize="7" fontWeight="bold" fontFamily="Liberation Sans, sans-serif" fill="#000">ICON</text>
  </svg>
);
const estimateCols: Col[] = [
  { w: 'w-[22px]', head: iconHead, align: '' },
  { w: 'w-[219px]', head: '品　　　名', align: 'pl-[2px] text-[14px]' },
  { w: 'w-[138px]', head: '', align: 'pl-[4px]' },
  { w: 'w-[70px]', head: '', align: 'text-right pr-[3px]' },
  { w: 'w-[84px]', head: '', align: 'text-right pr-[3px]' },
  { w: 'w-[105px]', head: '　金額', align: 'text-right pr-[3px]' },
  { w: 'w-[49px]', head: '見数率', align: 'text-right pr-[3px]' },
  { w: 'w-[52px]', head: '見積率', align: '' },
];
const hel = mid(<HelmetIcon main="#00d700" dark="#008200" accent="#a5a6a5" />);
const est = (icon: ReactNode, name: string, spec: string, q: string, p: string, total: string): ReactNode[] => [icon, name, spec, q, p, total, '1.0000', ''];
const estimateRows: ReactNode[][] = [
  est(mid(IconWhiteCube), 'ABCマンション新築工事', '', '', '', '179,499'),
  est(mid(<BoxIcon n="1" />), '電気設備工事', '', '', '', '179,499'),
  est(mid(<BoxIcon n="2" />), '受変電設備工事', '', '', '', '223,368'),
  est(mid(<BoxIcon n="3" />), '引込設備工事', '', '', '', '967,736'),
  est(hel, '電　  線', '', '', '', '2,475'),
  est(hel, '電　  線', '', '', '', ''),
  est(hel, '電　  線', '', '', '', '6,516'),
  est(hel, '電　  線', '', '18', '1,385', '24,930'),
  est(hel, '電　  線', 'IV 3.5mm2', '5', '275', '1,375'),
  est(hel, '電　  線', 'IV 5.5mm2', '8', '362', '2,896'),
  est(hel, '電　  線', 'IV    8mm2', '8', '1,385', '11,080'),
  est(hel, '電 線 管', 'VE 16', '21', '55', '1,155'),
];

/* ---------- toolbar ---------- */

type Tool = { icon: ReactNode; label: string; on?: boolean } | 'sep' | 'bar';
const tools: Tool[] = [
  { icon: IconNew, label: '新規作成' }, { icon: IconOpen, label: '開く' }, { icon: IconSave, label: '保存' }, 'sep',
  { icon: IconCheckBox, label: 'チェック' }, { icon: IconCut, label: '切り取り' }, { icon: IconCopy, label: 'コピー' }, { icon: IconPaste, label: '貼り付け' }, 'sep',
  { icon: IconPrint, label: '印刷' }, { icon: IconHelp, label: 'ヘルプ' }, { icon: IconCtxHelp, label: '状況ヘルプ' }, 'bar',
  { icon: IconBookOpen, label: '台帳' }, { icon: IconLabel, label: '帳票' }, { icon: IconWrite, label: '文字' }, 'sep',
  { icon: IconTreeOff, label: 'ツリー' }, 'sep',
  { icon: IconDelete, label: '削除' }, { icon: IconDiamond, label: '解除' }, 'sep',
  { icon: Icon321, label: '番号' }, { icon: IconPC, label: 'コンピュータ' }, 'sep',
  { icon: IconCascade, label: 'ウィンドウ配置', on: true }, 'bar',
  { icon: IconFrameOff, label: '枠' }, { icon: IconHeadOff, label: '労務' }, 'sep',
  { icon: IconChartOff, label: 'グラフ' }, 'sep',
  { icon: IconHandOff, label: '歩掛' }, { icon: IconFishOff, label: '材料' }, 'sep',
  { icon: IconLockOff, label: 'ロック' }, { icon: IconPalmOff, label: '移動' }, 'bar',
  { icon: IconTreeSync, label: '同期' }, 'sep',
  { icon: <BoxIcon n="?" />, label: '工種' }, { icon: IconCalc, label: '電卓' }, { icon: IconCard, label: '計算' }, { icon: IconAbacus, label: 'そろばん' },
  { icon: <HelmetIcon main="#00e3e7" dark="#008284" accent="#d60000" />, label: '部材' }, { icon: IconNotebook, label: 'ノート' }, { icon: IconDropper, label: 'スポイト' }, 'sep',
  { icon: IconPointerOff, label: '選択' }, { icon: IconRefresh, label: '更新' }, 'sep',
  { icon: IconGlobeOff, label: 'ウェブ' },
];

function Toolbar() {
  return (
    <div role="toolbar" className="flex h-[30px] shrink-0 items-center border-t border-white pb-[2px] pl-[6px] shadow-[0_-1px_0_#848284]">
      {tools.map((t, i) => {
        if (t === 'sep') return <span key={i} className="flex w-2 shrink-0 justify-center"><span className="h-[18px] w-[2px] border-r border-l border-r-white border-l-[#848284]" /></span>;
        if (t === 'bar') return <span key={i} className="flex h-full w-[14px] shrink-0 justify-center"><span className="h-full w-[2px] border-r border-l border-r-white border-l-[#848284]" /></span>;
        return (
          <button key={i} type="button" aria-label={t.label} className={`flex h-[22px] w-[23px] shrink-0 items-center justify-center ${t.on ? `${DITHER} shadow-[inset_1px_1px_0_#848284,inset_-1px_-1px_0_#fff]` : ''}`}>
            {t.icon}
          </button>
        );
      })}
      <span className="ml-[7px] h-full w-[2px] border-r border-l border-r-white border-l-[#848284]" />
    </div>
  );
}

const menus: [string, string][] = [
  ['ﾌｧｲﾙ', 'F'], ['編集', 'E'], ['挿入', 'I'], ['歩掛', 'B'], ['表示', 'V'], ['ｵﾌﾟｼｮﾝ', 'O'], ['帳票', 'P'], ['ｳｨﾝﾄﾞｳ', 'W'], ['ﾍﾙﾌﾟ', 'H'],
];

function Key({ t, k }: { t: string; k: string }) {
  return <>{t}(<u>{k}</u>)</>;
}

/* ---------- dialog ---------- */

const FACE = 'bg-[#d4d0c8] shadow-[inset_1px_1px_0_#fff,inset_-1px_-1px_0_#404040,inset_-2px_-2px_0_#808080]';
const SUNK = 'border-t-2 border-l-2 border-r border-b border-t-[#606060] border-l-[#606060] border-r-white border-b-white';
const CHECK = 'h-[13px] w-[13px] shrink-0 appearance-none border-t-2 border-l-2 border-r border-b border-t-[#606060] border-l-[#606060] border-r-white border-b-white';
const GROOVE = 'min-w-0 border-2 border-white [border-style:groove]';

function Option({ t, k, disabled }: { t: string; k: string; disabled?: boolean }) {
  return (
    <label className={`flex h-[21px] items-center gap-[5px] ${disabled ? 'text-[#848284] [text-shadow:1px_1px_0_#fff]' : ''}`}>
      <input type="checkbox" disabled={disabled} className={`${CHECK} ${disabled ? 'bg-[#d4d0c8]' : 'bg-white'}`} />
      <span><Key t={t} k={k} /></span>
    </label>
  );
}

function QuantityDialog() {
  return (
    <div role="dialog" aria-label="部材数量の問い合わせ" className="absolute top-[340px] left-[395px] w-[473px] bg-[#d4d0c8] p-[2px] pb-[15px] text-[12px] leading-[14px] whitespace-nowrap shadow-[inset_1px_1px_0_#fff,inset_-1px_-1px_0_#404040,inset_-2px_-2px_0_#808080]">
      <div className="flex h-[19px] items-center bg-gradient-to-r from-[#0a246a] to-[#a6caf0] pr-[4px] pl-[2px]">
        <h2 className="flex-1 text-[12px] font-bold text-white">部材数量の問い合わせ</h2>
        <button type="button" aria-label="閉じる" className={`h-[14px] w-4 ${FACE}`}>
          <svg width="16" height="14" viewBox="0 0 16 14" aria-hidden="true"><path d="M4 3L11 10M11 3L4 10" stroke="#000" strokeWidth="1.7" /></svg>
        </button>
      </div>
      <div className="flex gap-[17px] pl-[15px]">
        <div className="w-[277px] pt-3">
          <div className="flex">
            <span className="w-[35px] pt-[2px]">品名</span>
            <div className={`h-[41px] flex-1 whitespace-pre ${SUNK}`}>電　　線</div>
          </div>
          <div className="mt-[10px] flex gap-[18px]">
            <div className="w-[182px]">
              <div className="flex">
                <span className="w-[35px] pt-[2px]">仕様</span>
                <div className={`h-[65px] flex-1 ${SUNK}`}>IV 1.6mm</div>
              </div>
              <label className="flex h-[27px] items-center gap-[4px]">
                <input type="checkbox" className={`${CHECK} bg-white`} />
                <span><Key t="部材マスタ数量率を優先する" k="R" /></span>
              </label>
              <button type="button" className={`h-[22px] w-full ${FACE}`}><Key t="直下行の数量をコピーする" k="C" /></button>
            </div>
            <div className="flex w-[77px] flex-col pt-[7px]">
              <label htmlFor="qty" className="text-center"><Key t="原価数量" k="S" /></label>
              <input id="qty" defaultValue="123" className={`mt-[6px] h-5 w-full bg-white pr-[2px] pb-[2px] text-right ${SUNK}`} />
              <button type="button" className="mt-4 h-[21px] border border-black bg-[#d4d0c8] shadow-[inset_1px_1px_0_#fff,inset_-1px_-1px_0_#808080]">OK</button>
              <button type="button" className={`mt-2 h-[22px] ${FACE}`}>ｷｬﾝｾﾙ</button>
            </div>
          </div>
          <fieldset className={`mt-2 h-[75px] pt-1 pl-[8px] ${GROOVE}`}>
            <legend className="-ml-[3px] px-[3px]">コピー/置換え操作の注意！</legend>
            <p className="leading-[12px]">
              「コピー」や「置換え」時に個々の数量を使う場合は<br />
              「数量掛率優先」のチェックを外してください。<br />
              チェックが有る場合は、コピー後の基準数量を基準<br />
              値に数量を再計算します。
            </p>
          </fieldset>
        </div>
        <fieldset className={`mt-[5px] h-[255px] w-[147px] pt-[4px] pl-4 ${GROOVE}`}>
          <legend className="-ml-[9px] px-[9px]">
            <button type="button" className={`block h-[21px] w-[84px] ${FACE}`}><Key t="置換える" k="E" /></button>
          </legend>
          <Option t="以降連続動作" k="H" />
          <Option t="全チェック付行" k="A" disabled />
          <Option t="マスタ単価率優先" k="I" />
          <p className="flex h-[21px] items-center pl-[2px]"><span><Key t="置き換えない項目" k="F" /></span></p>
          <div className={`h-[138px] w-[111px] bg-white pt-[2px] pl-px ${SUNK}`}>
            <label className="flex items-center gap-px text-[#848284]">
              <span className="grid">
                <input type="checkbox" defaultChecked className="col-start-1 row-start-1 h-[11px] w-[11px] appearance-none border border-[#404040] bg-white" />
                <svg width="11" height="11" viewBox="0 0 11 11" className="pointer-events-none col-start-1 row-start-1" aria-hidden="true"><path d="M2.5 5L4.5 7.5L8.5 3" fill="none" stroke="#000" strokeWidth="2" /></svg>
              </span>
              各種数量
            </label>
          </div>
        </fieldset>
      </div>
    </div>
  );
}

const cells: [string, string][] = [
  ['', 'w-5'], ['NUM', 'w-[31px]'], ['', 'w-[28px]'], ['', 'w-6'], ['記録', 'w-[29px]'], ['329', 'w-[34px]'], ['10:02', 'w-[32px]'],
];

export default function App() {
  return (
    <div className="relative flex h-screen w-full flex-col overflow-hidden bg-black pt-[6px] pr-[6px] pb-[10px] pl-[5px] font-['Liberation_Sans','Noto_Sans_CJK_JP',sans-serif] text-[12px] text-black [font-feature-settings:'palt']">
      <main className="flex min-h-0 flex-1 flex-col bg-[#c6c3c6] p-1 shadow-[inset_1px_1px_0_#c6c3c6,inset_2px_2px_0_#fff,inset_-1px_-1px_0_#525152,inset_-2px_-2px_0_#e7e7e7]">
        <header className="flex h-[18px] shrink-0 items-center bg-gradient-to-r from-[#000084] to-[#1086d6] pr-[2px] pl-[3px]">
          {IconApp}
          <h1 className="ml-[2px] flex-1 text-[13px] text-white">Tetra 21</h1>
          <WinButton kind="min" />
          <WinButton kind="max" />
          <span className="ml-[2px] flex"><WinButton kind="close" /></span>
        </header>
        <nav className="flex h-[21px] shrink-0 items-start gap-[14px] pl-[7px]">
          {menus.map(([t, k]) => <button key={k} type="button" className="h-[18px] leading-[18px] whitespace-nowrap"><Key t={t} k={k} /></button>)}
        </nav>
        <Toolbar />

        <div className="ml-px flex min-h-0 flex-1 flex-col border-t border-r border-b border-l border-t-black border-r-white border-b-white border-l-black">
          <div className="flex min-h-0 flex-1">
            <div className="grid min-w-0 flex-1 grid-cols-1 grid-rows-[minmax(0,192fr)_minmax(0,179fr)_minmax(0,266fr)]">
              <Pane
                title="5月"
                icon={IconShip}
                bar="from-[#848284] to-[#bdbabd] font-medium text-[#dedbde]"
                tree={
                  <div className={`${treeBox} mb-[6px]`}>
                    <div className="flex min-h-0 flex-1"><Tree rows={months} label="物件" /><VScroll thumb="h-[86px]" /></div>
                  </div>
                }
                list={
                  <>
                    <Grid cols={projectCols} rows={projectRows} top="pt-[6px]" headBg="bg-[#007573]" headText="text-[13px]" head="h-[23px]" row="h-4 leading-[16px]" text="text-[13px]" alt={(i) => i % 2 === 1} base="bg-[#c6dfc6]" selected={6} checkW="w-[14px]" line="border-r border-[#c6c3c6]" />
                    <HScroll thumb="w-[127px]" />
                  </>
                }
              />
              <Pane
                title="01_ＩＶ 600V電線"
                icon={IconTruck}
                bar="from-[#848284] to-[#bdbabd] font-medium text-[#dedbde]"
                tree={
                  <div className={treeBox}>
                    <div className="flex min-h-0 flex-1"><Tree rows={cables} label="電線" /><VScroll space="h-4" thumb="h-[36px]" /></div>
                    <TreeHScroll thumb="w-[150px]" />
                  </div>
                }
                list={
                  <>
                    <Grid cols={materialCols} rows={materialRows} top="pt-[7px]" headBg="bg-[#ef3031]" headText="text-[12px]" head="h-[21px]" row="h-[15px] leading-[15px]" text="text-[11px]" alt={(i) => i === 3 || i === 5} base="bg-[#f7a6ad]" selected={1} checkW="w-[12px]" line="" />
                    <HScroll thumb="w-[200px]" />
                  </>
                }
              />
              <Pane
                last
                title="ABCマンション新築工事"
                icon={IconSheets}
                bar="from-[#000084] to-[#1086d6] font-normal text-white"
                tree={
                  <div className={treeBox}>
                    <div className="flex min-h-0 flex-1"><Tree rows={works} label="工事" /><VScroll thumb="h-[115px]" /></div>
                    <TreeHScroll thumb="w-[192px]" cut />
                  </div>
                }
                list={
                  <>
                    <Grid cols={estimateCols} rows={estimateRows} top="pt-[7px]" headBg="bg-[#00babd]" headText="text-[14px]" head="h-6" row="h-[17px] leading-[17px]" text="text-[13px]" alt={(i) => i % 2 === 0} base="bg-[#bdffff]" selected={5} checkW="w-[14px]" line="border-r border-[#c6c3c6]" />
                    <HScroll thumb="w-[248px]" cut />
                  </>
                }
              />
            </div>
            <VScroll thumb="h-[97%]" />
          </div>
          <div className="flex h-4 shrink-0">
            <div className={`flex min-w-0 flex-1 ${DITHER}`}>
              <Arrow dir="left" />
              <div className="min-w-0 flex-1"><div className={`h-4 w-[96%] ${RAISED}`} /></div>
              <Arrow dir="right" />
            </div>
            <div className="w-4" />
          </div>
        </div>

        <footer className="flex h-5 shrink-0 items-end gap-[3px] pl-[2px] leading-[17px]">
          <p className="flex-1">ﾍﾙﾌﾟを表示するには [F1] を押してください。</p>
          {cells.map(([t, w], i) => (
            <span key={i} className={`h-[17px] text-center whitespace-nowrap shadow-[inset_1px_1px_0_#848284,inset_-1px_-1px_0_#fff] ${w}`}>{t}</span>
          ))}
          <svg width="16" height="17" viewBox="0 0 16 17" aria-hidden="true"><path d="M3 16L15 4M7 16L15 8M11 16L15 12" stroke="#848284" strokeWidth="1.5" /><path d="M1.5 16L15 2.5M5.5 16L15 6.5M9.5 16L15 10.5" stroke="#fff" /></svg>
        </footer>
      </main>
      <QuantityDialog />
    </div>
  );
}
